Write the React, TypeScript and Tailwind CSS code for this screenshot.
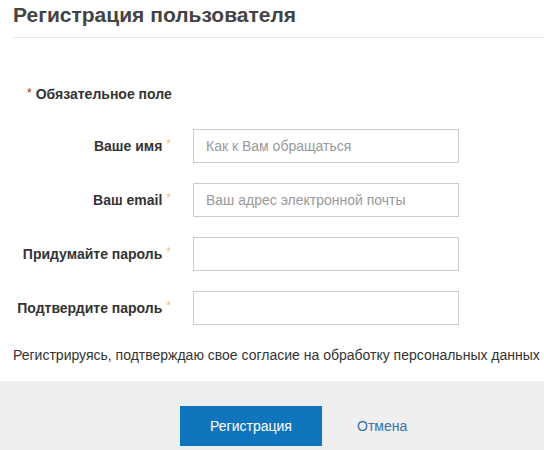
import React from "react";

const font = { fontFamily: '"Liberation Sans", Arial, sans-serif' };

function Row({ label, placeholder }: { label: string; placeholder?: string }) {
  return (
    <div className="flex items-center h-[34px]">
      <div className="w-[193px] pr-[22px] text-right text-[14px] font-bold text-[#333]">
        {label}
        <span className="text-[#f0c36d] font-normal ml-[4px] relative top-[-3px] text-[12px]">*</span>
      </div>
      <input
        className="w-[266px] h-[34px] border border-[#cccccc] px-[12px] text-[14px] text-[#333] placeholder:text-[#999] outline-none"
        style={font}
        placeholder={placeholder}
      />
    </div>
  );
}

export default function App() {
  return (
    <div className="w-[544px] h-[450px] bg-white overflow-hidden flex flex-col" style={font}>
      <div className="pl-[13px]">
        <div className="h-[38px] border-b border-[#e5e5e5] pt-[1px]">
          <h1 className="text-[21px] font-bold text-[#444] leading-[28px]">Регистрация пользователя</h1>
        </div>
      </div>
      <div className="pl-[13px] pt-[48px]">
        <div className="pl-[14px] text-[14px] font-bold text-[#333] leading-[16px]">
          <span className="text-[#cc2200] font-normal relative top-[-2px] mr-[4px] text-[12px]">*</span>
          Обязательное поле
        </div>
      </div>
      <div className="pt-[26px] flex flex-col gap-[20px]">
        <Row label="Ваше имя" placeholder="Как к Вам обращаться" />
        <Row label="Ваш email" placeholder="Ваш адрес электронной почты" />
        <Row label="Придумайте пароль" />
        <Row label="Подтвердите пароль" />
      </div>
      <div className="pl-[13px] pt-[21px] text-[14px] text-[#333] leading-[18px]">
        Регистрируясь, подтверждаю свое согласие на обработку персональных данных
      </div>
      <div className="mt-[17px] flex-1 bg-[#efefef] pt-[25px]">
        <div className="flex items-center">
          <button className="ml-[180px] w-[142px] h-[40px] bg-[#0f75bc] text-white text-[14px]" style={font}>
            Регистрация
          </button>
          <a className="ml-[35px] text-[14px] text-[#2f73b5]">Отмена</a>
        </div>
      </div>
    </div>
  );
}
